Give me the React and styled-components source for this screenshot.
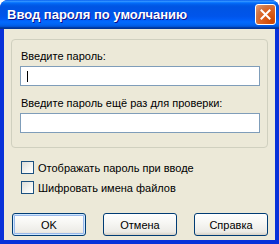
import React from "react"
import styled, { createGlobalStyle } from 'styled-components'

const Global = createGlobalStyle`
  html, body {
    margin: 0;
    padding: 0;
    background: #ffffff;
  }
  * {
    box-sizing: border-box;
  }
`

const Window = styled.div`
  width: 279px;
  height: 244px;
  display: flex;
  flex-direction: column;
  background: #0831d9;
  border-radius: 8px 8px 0 0;
  overflow: hidden;
  font-family: "Liberation Sans", Tahoma, sans-serif;
  font-size: 11px;
  color: #000000;
`

const TitleBar = styled.div`
  height: 29px;
  flex: none;
  display: flex;
  align-items: center;
  justify-content: space-between;
  padding: 0 3px 0 7px;
  background: linear-gradient(to bottom, #0058ee 0%, #3593ff 4%, #288eff 6%, #127dff 8%, #036ffc 10%, #0262ee 14%, #0057e5 20%, #0054e3 24%, #0055eb 56%, #005bf5 66%, #026afe 76%, #0062ef 86%, #0052d6 92%, #0040ab 94%, #003092 100%);
`

const Title = styled.span`
  color: #ffffff;
  font-family: "Liberation Sans", sans-serif;
  font-weight: bold;
  font-size: 13px;
  text-shadow: 1px 1px #0f1089;
`

const CloseButton = styled.div`
  width: 21px;
  height: 21px;
  border: 1px solid #ffffff;
  border-radius: 3px;
  background: radial-gradient(circle at 85% 85%, #cc4600 0%, #dc6527 55%, #cd7546 70%, #e8a07a 100%);
  display: flex;
  align-items: center;
  justify-content: center;
`

const Body = styled.div`
  flex: 1;
  margin: 0 4px 4px;
  background: #ece9d8;
  padding: 10px 7px 0;
  display: flex;
  flex-direction: column;
`

const GroupBox = styled.div`
  border: 1px solid #d0d0bf;
  border-radius: 4px;
  padding: 10px 7px 14px 8px;
  display: flex;
  flex-direction: column;
`

const Label = styled.div`
  line-height: 13px;
  height: 13px;
  margin-bottom: 3px;
  margin-left: 1px;
  margin-top: ${p => p.$top || 0}px;
`

const Input = styled.div`
  height: 20px;
  background: #ffffff;
  border: 1px solid #7f9db9;
  display: flex;
  align-items: center;
  padding-left: 6px;
`

const Caret = styled.span`
  width: 1px;
  height: 11px;
  background: #000000;
`

const Options = styled.div`
  display: flex;
  flex-direction: column;
  gap: 7px;
  margin-top: 13px;
  padding-left: 10px;
`

const CheckRow = styled.div`
  display: flex;
  align-items: center;
  gap: 4px;
  height: 13px;
`

const CheckBox = styled.span`
  width: 13px;
  height: 13px;
  border: 1px solid #1c5180;
  background: linear-gradient(135deg, #dcdcd7 0%, #f5f5f2 60%, #ffffff 100%);
`

const ButtonRow = styled.div`
  display: flex;
  justify-content: space-between;
  margin-top: 19px;
  padding: 0 0 0 1px;
`

const Button = styled.div`
  width: 74px;
  height: 23px;
  border: 1px solid #003c74;
  border-radius: 3px;
  display: flex;
  align-items: center;
  justify-content: center;
  background: linear-gradient(to bottom, #ffffff 0%, #f7f7f4 40%, #ecebe6 85%, #d6d0c5 100%);
  box-shadow: ${p => p.$default ? 'inset 0 0 0 1px #cee7ff, inset 0 0 0 2px #98b8ea' : 'none'};
`

export default function App() {
  return (
    <Window>
      <Global />
      <TitleBar>
        <Title>Ввод пароля по умолчанию</Title>
        <CloseButton>
          <svg width="11" height="11" viewBox="0 0 11 11">
            <path d="M1.5 1.5 L9.5 9.5 M9.5 1.5 L1.5 9.5" stroke="#ffffff" strokeWidth="2" strokeLinecap="square" />
          </svg>
        </CloseButton>
      </TitleBar>
      <Body>
        <GroupBox>
          <Label>Введите пароль:</Label>
          <Input><Caret /></Input>
          <Label $top={11}>Введите пароль ещё раз для проверки:</Label>
          <Input />
        </GroupBox>
        <Options>
          <CheckRow><CheckBox />Отображать пароль при вводе</CheckRow>
          <CheckRow><CheckBox />Шифровать имена файлов</CheckRow>
        </Options>
        <ButtonRow>
          <Button $default>OK</Button>
          <Button>Отмена</Button>
          <Button>Справка</Button>
        </ButtonRow>
      </Body>
    </Window>
  )
}
